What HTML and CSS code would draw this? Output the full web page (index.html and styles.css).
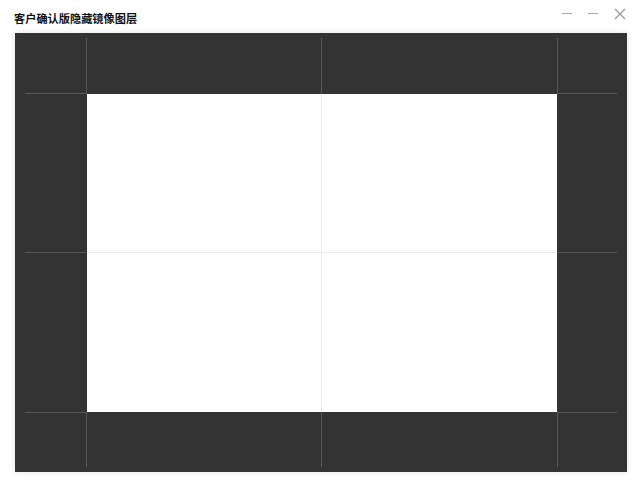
FILE: index.html
```html
<!DOCTYPE html>
<html lang="zh">
<head>
<meta charset="utf-8">
<link rel="stylesheet" href="styles.css">
</head>
<body>
<div class="window">
  <div class="titlebar">
    <div class="title">客户确认版隐藏镜像图层</div>
    <div class="controls">
      <span class="ctl dash"></span>
      <span class="ctl dash"></span>
      <svg class="ctl close" width="12" height="12" viewBox="0 0 12 12"><path d="M1 1L11 11M11 1L1 11" stroke="#9a9a9a" stroke-width="1.3" fill="none"/></svg>
    </div>
  </div>
  <div class="canvas">
    <div class="sheet"></div>
    <svg class="guides" width="612" height="439" viewBox="0 0 612 439">
      <g stroke="#585858" stroke-width="1">
        <line x1="71.5" y1="5" x2="71.5" y2="61"/>
        <line x1="71.5" y1="379" x2="71.5" y2="434"/>
        <line x1="306.5" y1="5" x2="306.5" y2="61"/>
        <line x1="306.5" y1="379" x2="306.5" y2="434"/>
        <line x1="542.5" y1="5" x2="542.5" y2="61"/>
        <line x1="542.5" y1="379" x2="542.5" y2="434"/>
        <line x1="10" y1="60.5" x2="72" y2="60.5"/>
        <line x1="542" y1="60.5" x2="602" y2="60.5"/>
        <line x1="10" y1="219.5" x2="72" y2="219.5"/>
        <line x1="542" y1="219.5" x2="602" y2="219.5"/>
        <line x1="10" y1="379.5" x2="72" y2="379.5"/>
        <line x1="542" y1="379.5" x2="602" y2="379.5"/>
      </g>
      <g stroke="#ececec" stroke-width="1">
        <line x1="306.5" y1="61" x2="306.5" y2="379"/>
        <line x1="72" y1="219.5" x2="542" y2="219.5"/>
      </g>
    </svg>
  </div>
</div>
</body>
</html>
```
FILE: styles.css
```css
html, body {
  margin: 0;
  padding: 0;
  background: #ffffff;
}
.window {
  width: 640px;
  height: 480px;
  display: flex;
  flex-direction: column;
  background: #ffffff;
}
.titlebar {
  height: 33px;
  display: flex;
  align-items: center;
  justify-content: space-between;
  padding: 0 14px 0 14px;
  box-sizing: border-box;
}
.title {
  font-family: "Noto Sans CJK SC", "Noto Sans", sans-serif;
  font-size: 11.2px;
  font-weight: 700;
  color: #111111;
  margin-top: 2px;
}
.controls {
  display: flex;
  align-items: center;
  gap: 16px;
  margin-top: -6px;
}
.dash {
  width: 10px;
  height: 0;
  border-top: 1px dashed #9c9c9c;
}
.close {
  display: block;
}
.canvas {
  position: relative;
  width: 612px;
  height: 439px;
  margin-left: 15px;
  background: #333333;
  box-shadow: 0 0 6px rgba(0,0,0,0.12);
  box-sizing: border-box;
  padding: 61px 70px 60px 72px;
}
.sheet {
  width: 100%;
  height: 100%;
  background: #ffffff;
}
.guides {
  position: absolute;
  left: 0;
  top: 0;
}
```
